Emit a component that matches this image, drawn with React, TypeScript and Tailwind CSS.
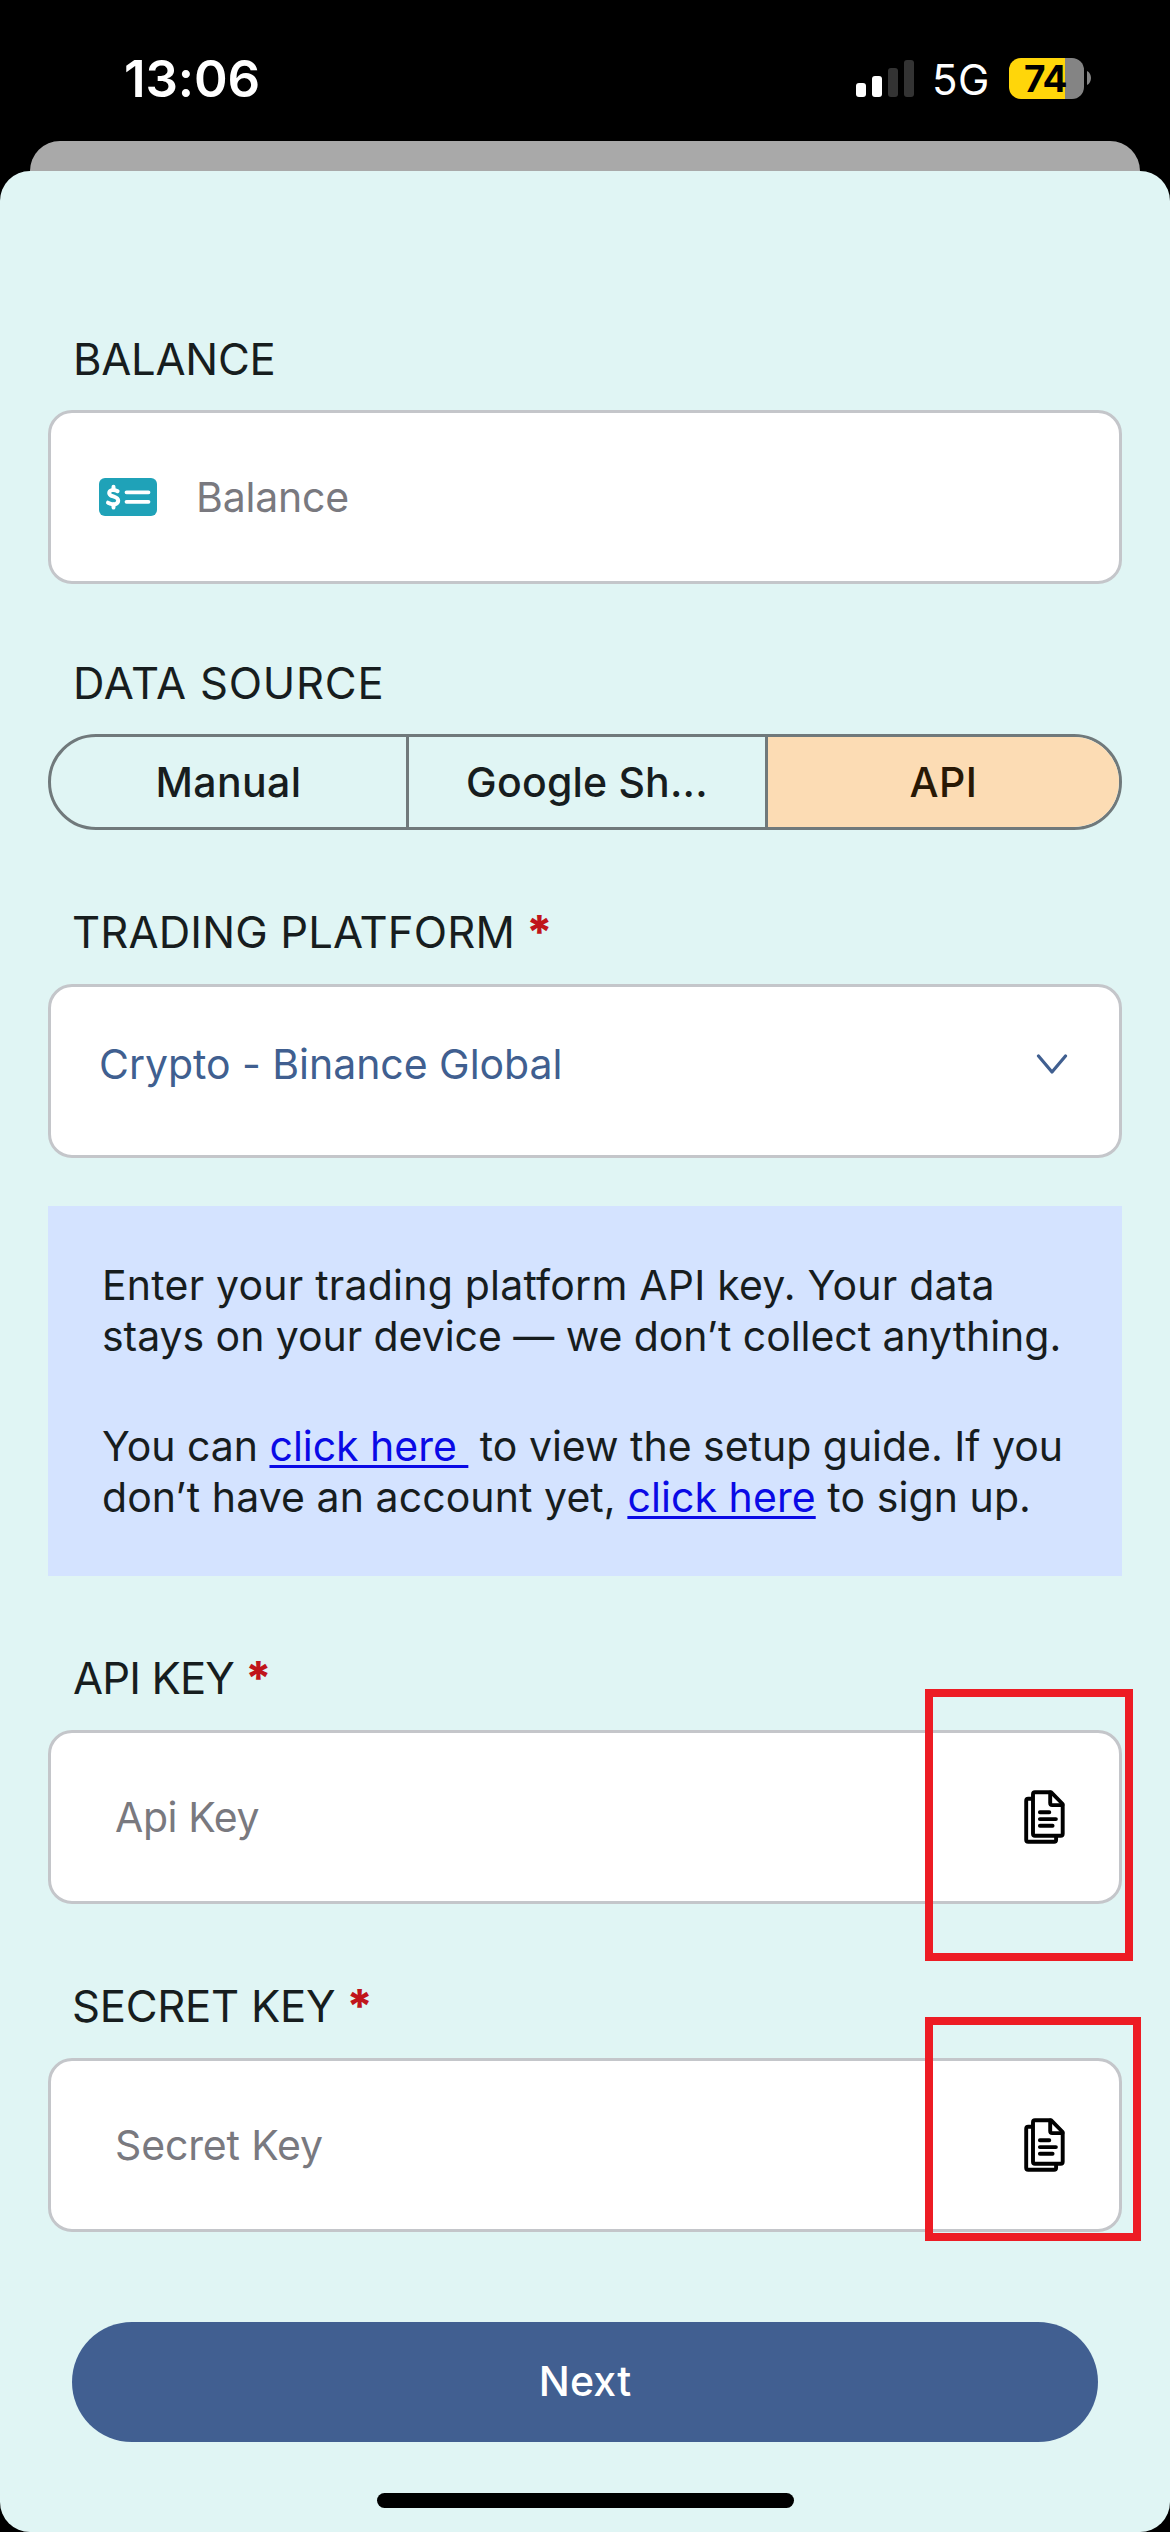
import React from "react";
import type { ReactNode } from "react";

function StatusBar() {
  return (
    <header className="flex h-[141px] shrink-0 items-start justify-between pt-[48px] pr-[79px] pl-[124px] text-white">
      <div className="text-[51px] leading-[61px] font-semibold tracking-[-0.1px]">13:06</div>
      <div className="flex h-[60px] items-center">
        <div className="flex h-[37px] items-end gap-[6px]">
          <span className="h-[14px] w-[10px] rounded-[3px] bg-white" />
          <span className="h-[21px] w-[10px] rounded-[3px] bg-white" />
          <span className="h-[29px] w-[10px] rounded-[3px] bg-[#333333]" />
          <span className="h-[37px] w-[10px] rounded-[3px] bg-[#333333]" />
        </div>
        <div className="mt-[3px] ml-[18px] w-[77px] text-[42px] leading-[60px] tracking-[0.4px]">5G</div>
        <div className="flex h-[41px] w-[75px] items-center rounded-[12px] bg-[linear-gradient(to_right,#ffd60a_56px,#848484_56px)] pl-[15px] text-[37px] leading-[41px] font-bold tracking-[-0.9px] text-black">
          74
        </div>
        <svg className="ml-[3px] h-[14px] w-[4px]" viewBox="0 0 4 14" fill="#848484">
          <path d="M0 0C2.400 1 4 3.800 4 7S2.400 13 0 14Z" />
        </svg>
      </div>
    </header>
  );
}

function Label({ children, required = false, className }: { children: ReactNode; required?: boolean; className: string }) {
  return (
    <div className={`flex h-[50px] items-center text-[43.6px] leading-[50px] whitespace-pre text-[#171d1e] ${className}`}>
      <span>{children}</span>
      {required && <Asterisk />}
    </div>
  );
}

function Asterisk() {
  return (
    <span className="-mt-[2px] ml-[11px] text-[46px] font-extrabold tracking-normal text-[#c0151b]">*</span>
  );
}

function Field({ children, className }: { children: ReactNode; className: string }) {
  return (
    <div className={`relative flex h-[174px] items-center rounded-[24px] border-[3px] border-[#c4c6ca] bg-white text-[41px] leading-[50px] ${className}`}>
      {children}
    </div>
  );
}

function MoneyIcon() {
  return (
    <svg className="h-[38px] w-[58px]" viewBox="0 0 58 38" fill="none" stroke="white" strokeLinecap="round">
      <rect width="58" height="38" rx="6" fill="#1fa2b8" stroke="none" />
      <path d="M18.600 13.200C17 12.200 14.800 11.800 13 12.100C10 12.600 9.300 15.700 11.600 17.300C13.800 18.800 19.200 18.800 19.200 22.600C19.200 25.900 15.600 26.700 12.800 26.100C11.200 25.800 10 25.200 9 24.700" strokeWidth="4" />
      <path d="M14.500 8.800V12M14.500 26.500V29.500" strokeWidth="4" />
      <path d="M27.500 14.300H49.500M27.500 23.800H49.500" strokeWidth="3.800" />
    </svg>
  );
}

function PasteIcon() {
  return (
    <svg className="h-[54px] w-[41px]" viewBox="-0.500 -0.500 41 54" fill="none" stroke="black" strokeWidth="3.900" strokeLinecap="round" strokeLinejoin="round">
      <path d="M7.500 8.300H3.700a2 2 0 0 0-2 2V49.300a2 2 0 0 0 2 2H29.600a2 2 0 0 0 2-2V46" />
      <path d="M10.500 1.700H26.500L38.200 13.500V43.200a2 2 0 0 1-2 2H10.500a2 2 0 0 1-2-2V3.700a2 2 0 0 1 2-2Z" />
      <path d="M25.700 2V12.600a2 2 0 0 0 2 2H38" />
      <path d="M15.400 21.700H24.800M15.400 28.600H31.400M15.400 35.300H28.100" />
    </svg>
  );
}

function DataSourceTabs() {
  return (
    <div className="flex h-[96px] overflow-hidden rounded-full border-[3px] border-[#70797b] text-[41px] leading-[90px] font-medium text-[#171d1e]">
      <button className="w-[358px] border-r-[3px] border-[#70797b] tracking-[0.4px]">Manual</button>
      <button className="w-[359px] border-r-[3px] border-[#70797b] tracking-[0.2px]">Google Sh...</button>
      <button className="flex-1 bg-[#fcdcb4] tracking-[0.5px] text-[#281805]">API</button>
    </div>
  );
}

function Link({ children }: { children: ReactNode }) {
  return (
    <a className="text-[#0a0ae6] underline decoration-[3px] underline-offset-[4px] [text-decoration-skip-ink:none]">
      {children}
    </a>
  );
}

function InfoPanel() {
  return (
    <section className="mt-[48px] h-[370px] bg-[#d4e3ff] pt-[54px] pl-[54px] text-[41px] leading-[51px] whitespace-pre text-[#171d1e]">
      <p className="tracking-[0.22px]">Enter your trading platform API key. Your data</p>
      <p className="tracking-[-0.05px]">stays on your device — we don’t collect anything.</p>
      <p className="mt-[59px] tracking-[-0.02px]">
        You can <Link>{"click here "}</Link>
        {" to view the setup guide. If you"}
      </p>
      <p className="tracking-[0.08px]">
        don’t have an account yet, <Link>click here</Link> to sign up.
      </p>
    </section>
  );
}

export default function App() {
  return (
    <div className="flex h-[2532px] w-[1170px] flex-col overflow-hidden bg-black font-['Inter',sans-serif]">
      <StatusBar />
      <div className="mx-[30px] h-[30px] shrink-0 rounded-t-[30px] bg-[#a9a9a9]" />
      <main className="flex flex-1 flex-col rounded-[30px] bg-[#e0f5f4] px-[48px] pt-[164px]">
        <Label className="mb-[25px] pl-[25px] tracking-[-0.25px]">BALANCE</Label>
        <Field className="pl-[48px]">
          <MoneyIcon />
          <span className="ml-[39px] tracking-[-0.2px] text-[#79797f]">Balance</span>
        </Field>

        <Label className="mt-[75px] mb-[25px] pl-[25px] tracking-[0.77px]">DATA SOURCE</Label>
        <DataSourceTabs />

        <Label required className="mt-[78px] mb-[26px] pl-[24px] tracking-[0.15px]">TRADING PLATFORM</Label>
        <Field className="justify-between pr-[51px] pb-[14px] pl-[48px]">
          <span className="tracking-[-0.04px] text-[#405f90]">Crypto - Binance Global</span>
          <svg className="mt-[1px] h-[21px] w-[32px]" viewBox="0 0 32 21" fill="none" stroke="#405f90" strokeWidth="3.200" strokeLinecap="round" strokeLinejoin="round">
            <path d="M2.500 2L16 18L29.500 2" />
          </svg>
        </Field>

        <InfoPanel />

        <Label required className="mt-[78px] mb-[26px] pl-[25px] tracking-[-0.85px]">API KEY</Label>
        <Field className="justify-between pr-[54px] pl-[64px]">
          <span className="tracking-[-0.4px] text-[#79797f]">Api Key</span>
          <PasteIcon />
          <div className="absolute top-[-44px] right-[-14px] h-[272px] w-[208px] border-8 border-[#ed1c24]" />
        </Field>

        <Label required className="mt-[78px] mb-[26px] pl-[24px] tracking-[-0.24px]">SECRET KEY</Label>
        <Field className="justify-between pr-[54px] pl-[64px]">
          <span className="tracking-[-0.14px] text-[#79797f]">Secret Key</span>
          <PasteIcon />
          <div className="absolute top-[-44px] right-[-22px] h-[224px] w-[216px] border-8 border-[#ed1c24]" />
        </Field>

        <button className="mx-[24px] mt-[90px] h-[120px] shrink-0 rounded-full bg-[#415f91] text-[41px] font-medium tracking-[0.24px] text-white">
          Next
        </button>
        <div className="mx-auto mt-[51px] h-[15px] w-[417px] rounded-full bg-black" />
      </main>
    </div>
  );
}
